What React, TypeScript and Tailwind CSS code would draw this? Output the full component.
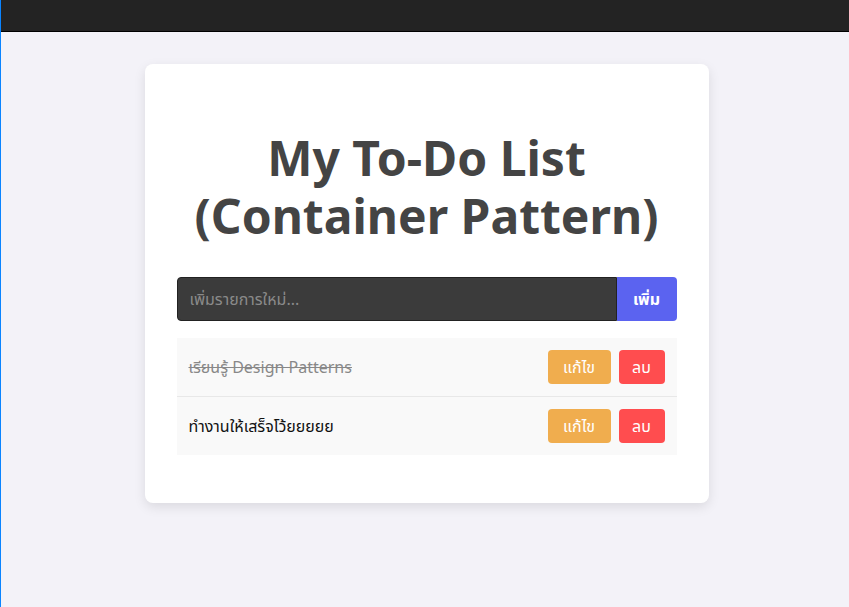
import { useState } from "react";

type Todo = { id: number; text: string; done: boolean };

const font = "font-['Noto_Sans','Noto_Sans_Thai','DejaVu_Sans',sans-serif]";

export default function App() {
  const [todos] = useState<Todo[]>([
    { id: 1, text: "เรียนรู้ Design Patterns", done: true },
    { id: 2, text: "ทำงานให้เสร็จโว้ยยยยย", done: false },
  ]);

  return (
    <div className={`min-h-[607px] bg-[#f3f2f8] border-l border-[#0a84ff] ${font}`}>
      <div className="h-8 bg-[#232323] border-b border-black" />
      <div className="flex justify-center pt-8 pl-[3px]">
        <div className="w-[564px] bg-white rounded-lg shadow-[0_4px_12px_rgba(0,0,0,0.1)] p-8">
          <h1 className="text-center text-[48px] leading-[58px] font-bold text-[#444] mt-[33px] mb-8">
            My To-Do List (Container Pattern)
          </h1>
          <div className="flex h-11">
            <input
              placeholder="เพิ่มรายการใหม่..."
              className="flex-1 bg-[#3b3b3b] border border-[#222] rounded-l px-3 text-base text-white placeholder:text-[#8a8a8a] outline-none"
            />
            <button className="w-[60px] bg-[#5b63f0] text-white font-bold rounded-r text-base">
              เพิ่ม
            </button>
          </div>
          <ul className="mt-[17px] mb-4">
            {todos.map((t) => (
              <li
                key={t.id}
                className="flex items-center justify-between bg-[#f9f9f9] border-b border-[#e8e8e8] last:border-b-0 px-3 py-3"
              >
                <span className={t.done ? "line-through text-[#888]" : "text-[#111]"}>
                  {t.text}
                </span>
                <div className="flex gap-2">
                  <button className="w-[63px] h-[34px] bg-[#f0ad4e] text-white rounded text-base">
                    แก้ไข
                  </button>
                  <button className="w-[46px] h-[34px] bg-[#ff4d4f] text-white rounded text-base">
                    ลบ
                  </button>
                </div>
              </li>
            ))}
          </ul>
        </div>
      </div>
    </div>
  );
}
